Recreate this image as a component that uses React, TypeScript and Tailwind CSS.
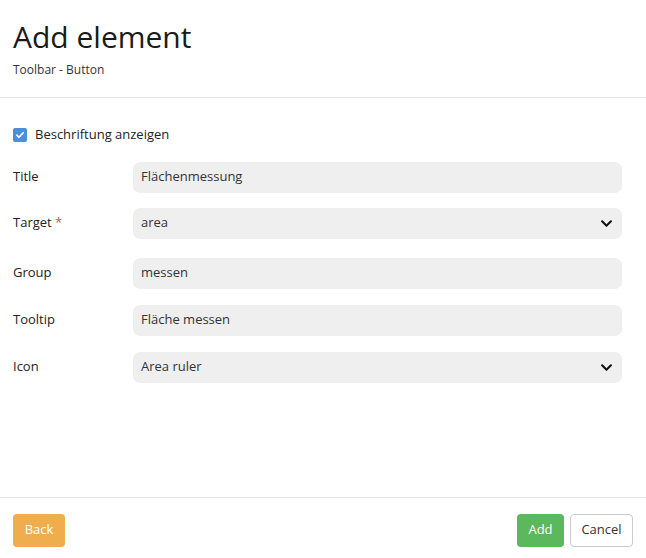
import React from "react";

const font = { fontFamily: '"Open Sans", "Noto Sans", sans-serif' };

interface FieldProps {
  label: string;
  value: string;
  required?: boolean;
  select?: boolean;
  className?: string;
}

const Chevron = () => (
  <svg width="13" height="13" viewBox="0 0 448 512" className="text-[#111]">
    <path
      fill="currentColor"
      d="M207 381.5L12.7 187.1c-9.4-9.4-9.4-24.6 0-33.9l22.7-22.7c9.4-9.4 24.5-9.4 33.9 0L224 284.5l154.7-154c9.4-9.3 24.5-9.3 33.9 0l22.7 22.7c9.4 9.4 9.4 24.6 0 33.9L241 381.5c-9.4 9.4-24.6 9.4-34 0z"
    />
  </svg>
);

const Field: React.FC<FieldProps> = ({ label, value, required, select, className }) => (
  <div className={"flex items-center " + (className ?? "")}>
    <div className="w-[120px] text-[13px] text-[#222]">
      {label}
      {required && <span className="text-[#d9534f]"> *</span>}
    </div>
    <div className="flex-1 h-[31px] bg-[#efefef] rounded-[7px] flex items-center justify-between pl-[8px] pr-[9px] text-[13px] text-[#333]">
      <span>{value}</span>
      {select && <Chevron />}
    </div>
  </div>
);

export default function App() {
  return (
    <div className="w-[646px] h-[558px] bg-white flex flex-col" style={font}>
      <div className="px-[13px] pt-[17px] h-[98px] border-b border-[#e3e3e3]">
        <h1 className="text-[30px] leading-[40px] text-[#1a1a1a]">Add element</h1>
        <div className="text-[12px] text-[#333] mt-[4px]">Toolbar - Button</div>
      </div>
      <div className="flex-1 pl-[13px] pr-[24px] pt-[27px]">
        <label className="flex items-center gap-[8px] text-[13px] text-[#222]">
          <span className="w-[14px] h-[14px] rounded-[2px] bg-[#4a8fd9] flex items-center justify-center">
            <svg width="10" height="10" viewBox="0 0 10 10">
              <path d="M1.8 5.2 L4 7.3 L8.3 2.6" stroke="white" strokeWidth="1.6" fill="none" strokeLinecap="round" strokeLinejoin="round" />
            </svg>
          </span>
          Beschriftung anzeigen
        </label>
        <div className="flex flex-col mt-[17px]">
          <Field label="Title" value="Flächenmessung" />
          <Field label="Target" value="area" required select className="mt-[15px]" />
          <Field label="Group" value="messen" className="mt-[19px]" />
          <Field label="Tooltip" value="Fläche messen" className="mt-[16px]" />
          <Field label="Icon" value="Area ruler" select className="mt-[16px]" />
        </div>
      </div>
      <div className="h-[61px] border-t border-[#e3e3e3] flex items-center justify-between pl-[13px] pr-[13px] pt-[4px]">
        <button className="h-[33px] w-[52px] rounded-[4px] bg-[#f0ad4e] text-white text-[13px]">Back</button>
        <div className="flex gap-[6px]">
          <button className="h-[33px] w-[47px] rounded-[4px] bg-[#5cb85c] text-white text-[13px]">Add</button>
          <button className="h-[33px] w-[63px] rounded-[4px] bg-white border border-[#ccc] text-[#333] text-[13px]">Cancel</button>
        </div>
      </div>
    </div>
  );
}
